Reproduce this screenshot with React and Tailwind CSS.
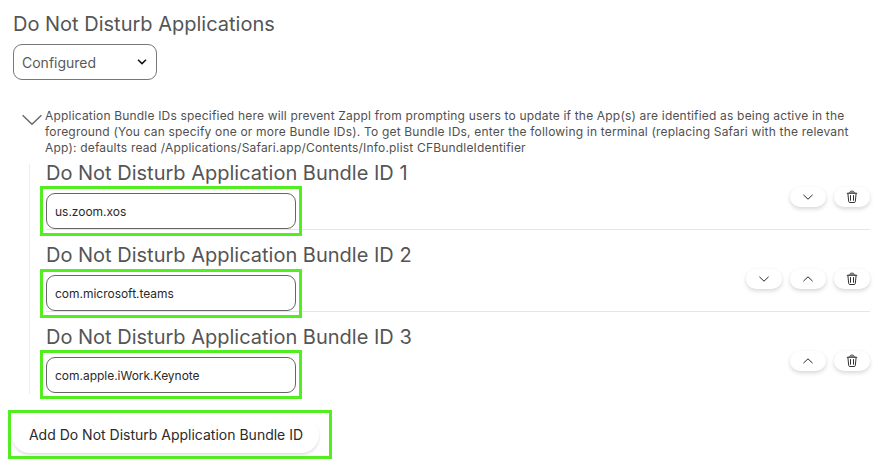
const inter = "font-['Inter',sans-serif]";

function Chevron({ up }) {
  return (
    <svg width="12" height="12" viewBox="0 0 12 12" fill="none" stroke="#2a2a2a" strokeWidth="1">
      <path d={up ? 'M1.4 8.2 6 3.8l4.6 4.4' : 'M1.4 3.8 6 8.2l4.6-4.4'} />
    </svg>
  );
}

function Trash() {
  return (
    <svg width="12" height="14" viewBox="0 0 12 14" fill="none" stroke="#333" strokeWidth="1">
      <path d="M.8 3.3h10.4M3.6 3.2c.2-1.4.8-2 1.6-2h1.6c.8 0 1.4.6 1.6 2M1.9 3.5l.8 8c.1.7.5 1 1.1 1h4.4c.6 0 1-.3 1.1-1l.8-8M4.5 5.1v5.6M7.5 5.1v5.6" />
      <path d="M2.6 2.6h6.8" stroke="#777" />
    </svg>
  );
}

function Pill({ children }) {
  return (
    <button className="flex h-5 w-9 items-center justify-center rounded-full bg-white shadow-[0_2px_4px_rgba(0,0,0,0.16)]">
      {children}
    </button>
  );
}

function Row({ n, value, down, up, size, mark }) {
  return (
    <div className={`flex items-end justify-between ${size}`}>
      <div>
        <h2 className="mb-[10px] whitespace-nowrap text-[20px] font-normal leading-[19px] text-[#555]">
          Do Not Disturb Application Bundle ID {n}
        </h2>
        <div className="relative">
          <div className="flex h-9 w-[250px] items-center rounded-[9px] border border-[#666] bg-white pl-2 pt-px text-[12px] tracking-[-0.02px] text-[#2a2a2a]">
            {value}
          </div>
          <div className={`absolute -left-1.5 w-[262px] border-[3px] border-[#52ee22] ${mark}`} />
        </div>
      </div>
      <div className="mb-[22px] flex gap-2">
        {down && <Pill><Chevron /></Pill>}
        {up && <Pill><Chevron up /></Pill>}
        <Pill><Trash /></Pill>
      </div>
    </div>
  );
}

export default function App() {
  return (
    <div className={`h-[467px] w-[881px] overflow-hidden bg-white pl-[13px] pt-[9px] ${inter}`}>
      <h1 className="h-[35px] text-[20px] font-normal leading-[30px] text-[#555]">
        Do Not Disturb Applications
      </h1>
      <div className="flex h-9 w-36 items-center justify-between rounded-[9px] border border-[#777] pl-2 pr-[9px] text-[14px] text-[#5a5a5a]">
        <span className="pt-px">Configured</span>
        <svg width="10" height="6" viewBox="0 0 10 6" fill="none" stroke="#111" strokeWidth="1.5">
          <path d="M1 .8 5 4.6 9 .8" />
        </svg>
      </div>
      <div className="mt-7 flex h-14 pl-[9px]">
        <svg className="mr-[3px] mt-[6px] shrink-0" width="20" height="12" viewBox="0 0 20 12" fill="none" stroke="#666" strokeWidth="1.4">
          <path d="M.6 1.2 10 10.3l9.4-9.1" />
        </svg>
        <p className="whitespace-nowrap text-[12px] leading-4 tracking-[0.187px] text-[#505050]">
          Application Bundle IDs specified here will prevent Zappl from prompting users to update if the App(s) are identified as being active in the<br />
          foreground (You can specify one or more Bundle IDs). To get Bundle IDs, enter the following in terminal (replacing Safari with the relevant<br />
          App): defaults read /Applications/Safari.app/Contents/Info.plist CFBundleIdentifier
        </p>
      </div>
      <div className="ml-4 h-[230px] w-[841px] border-l border-[#eee] pl-4">
        <Row n={1} value="us.zoom.xos" down size="h-[66px] border-b border-[#e6e6e6]" mark="-top-[7px] h-[50px]" />
        <Row n={2} value="com.microsoft.teams" down up size="h-[82px] border-b border-[#e6e6e6]" mark="-top-[6px] h-[49px]" />
        <Row n={3} value="com.apple.iWork.Keynote" up size="h-[82px] border-b border-transparent" mark="-top-[7px] h-[49px]" />
      </div>
      <div className="-ml-[5px] mt-4 flex h-[49px] w-[324px] items-center border-[3px] border-[#52ee22] pl-px">
        <button className="h-9 w-[307px] rounded-full bg-white pl-px text-[14px] text-[#2a2a2a] shadow-[0_2px_3px_rgba(0,0,0,0.12)]">
          Add Do Not Disturb Application Bundle ID
        </button>
      </div>
    </div>
  );
}
